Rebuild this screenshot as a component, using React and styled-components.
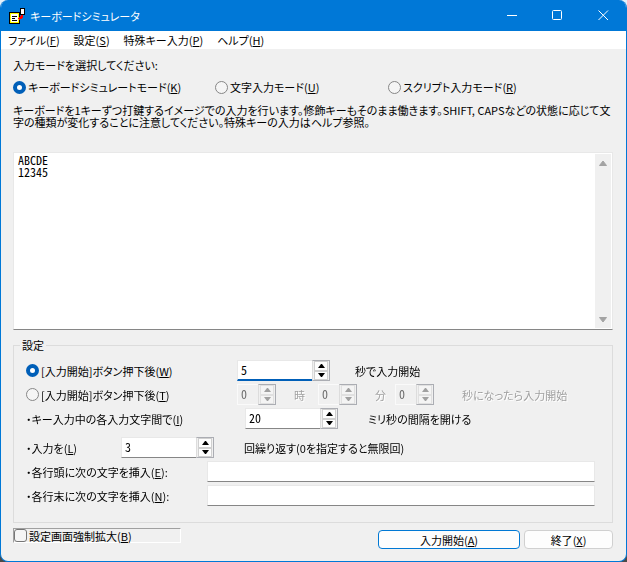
import { useState } from "react"
import styled, { createGlobalStyle } from "styled-components"

const GlobalStyle = createGlobalStyle`
  * {
    box-sizing: border-box;
  }

  body {
    margin: 0;
    background: linear-gradient(#e4f1fb 50%, #4a4a48 50%);
  }

  body, button, input, textarea {
    font-family: "Noto Sans CJK JP", sans-serif;
    font-size: 11px;
    font-feature-settings: "palt";
    color: #000;
  }
`

const Window = styled.div`
  display: flex;
  flex-direction: column;
  min-height: 100vh;
  border: 1px solid #0078d7;
  border-top: 0;
  border-radius: 8px;
  background-color: #f0f0f0;
  overflow: hidden;
`

const TitleBar = styled.header`
  display: flex;
  align-items: center;
  height: 31px;
  padding-left: 8px;
  background-color: #0078d7;
  color: #fff;
`

const Title = styled.h1`
  flex: 1;
  margin: 0 0 0 4px;
  font-size: 11px;
  font-weight: 400;
`

const CaptionButton = styled.button`
  display: flex;
  align-items: center;
  justify-content: center;
  width: 46px;
  height: 31px;
  padding: 0;
  border: 0;
  background: none;

  &:hover {
    background-color: rgba(255, 255, 255, 0.15);
  }
`

const MenuBar = styled.nav`
  display: flex;
  gap: 14px;
  height: 18px;
  padding: 0 7px;
  background-color: #fff;
`

const MenuItem = styled.button`
  padding: 0;
  border: 0;
  background: none;
  line-height: 18px;
`

const Body = styled.main`
  display: flex;
  flex: 1;
  flex-direction: column;
  padding: 8px 13px 12px 12px;
`

const Prompt = styled.p`
  margin: 0;
  line-height: 16px;
`

const Modes = styled.div`
  display: grid;
  grid-template-columns: 202px 173px 1fr;
  margin-top: 6px;
`

const Choice = styled.label`
  display: flex;
  align-items: center;
  gap: 2px;
  line-height: 16px;
  white-space: nowrap;
`

const Radio = styled.input.attrs({ type: "radio" })`
  appearance: none;
  width: 13px;
  height: 13px;
  margin: 0;
  border: 1px solid #868686;
  border-radius: 50%;
  background-color: #f5f5f5;

  &:checked {
    border: 4px solid #005fb8;
    background-color: #fff;
  }
`

const Check = styled.input.attrs({ type: "checkbox" })`
  appearance: none;
  width: 13px;
  height: 13px;
  margin: 0;
  border: 1px solid #767676;
  border-radius: 3px;
  background-color: #f5f5f5;

  &:checked {
    background-color: #005fb8;
  }
`

const Description = styled.p`
  margin: 9px 0 0;
  line-height: 12px;
  white-space: nowrap;
`

const Editor = styled.div`
  display: flex;
  flex: 1;
  min-height: 177px;
  margin-top: 24px;
  padding: 1px 1px 1px 0;
  border: 1px solid #e8e8e8;
  border-bottom-color: #868686;
  background-color: #fff;
`

const EditorText = styled.textarea`
  flex: 1;
  min-width: 0;
  padding: 0 4px;
  border: 0;
  outline: 0;
  background: none;
  font-size: 12px;
  line-height: 12px;
  font-feature-settings: "hwid";
  resize: none;
`

const ScrollBar = styled.div`
  display: flex;
  flex-direction: column;
  justify-content: space-between;
  width: 16px;
  background-color: #f0f0f0;
`

const ScrollButton = styled.button`
  width: 16px;
  height: 17px;
  padding: 0;
  border: 0;
  background: none;
  line-height: 0;
`

const Settings = styled.fieldset`
  min-width: 0;
  margin: 7px 0 0;
  padding: 7px 17px 16px 12px;
  border: 1px solid #dcdcdc;
`

const Legend = styled.legend`
  margin-left: -6px;
  padding: 0 2px;
  line-height: 16px;
`

const Rows = styled.div`
  display: flex;
  flex-direction: column;
  gap: 3px;

  & + & {
    margin-top: 8px;
  }
`

const Row = styled.div`
  display: flex;
  align-items: center;
  height: 21px;
  white-space: nowrap;
`

const Lead = styled.div`
  flex: none;
  width: ${props => props.width}px;
`

const Unit = styled.span`
  margin: 0 ${props => props.after || 0}px 0 ${props => props.before}px;
  line-height: 16px;

  ${props => props.disabled && `
    color: #a0a0a0;
    text-shadow: 1px 1px #fff;
  `}
`

const Spin = styled.div`
  display: flex;
  flex: none;
  width: ${props => props.width}px;
  height: 21px;
`

const SpinInput = styled.input`
  flex: 1;
  min-width: 0;
  padding: 0 3px 3px;
  border: 1px solid #e8e8e8;
  border-right: 0;
  border-bottom-color: #868686;
  border-radius: 0;
  outline: 0;
  background-color: #fff;
  font-size: 12px;
  font-feature-settings: "hwid";

  &:focus {
    border-bottom: 2px solid #005fb8;
    padding-bottom: 2px;
  }

  &:disabled {
    border-color: #fafafa;
    background-color: #f0f0f0;
    color: #6d6d6d;
  }
`

const SpinButtons = styled.div`
  display: flex;
  flex-direction: column;
  width: 18px;
  border: 1px solid #abadb3;
  border-left-color: #dcdcdc;
  background-color: #f0f0f0;
`

const SpinButton = styled.button`
  display: flex;
  flex: 1;
  align-items: center;
  justify-content: center;
  margin: 0 1px;
  padding: 0;
  border: 1px solid #d0d0d0;
  background-color: #fdfdfd;
  color: #000;

  &:disabled {
    border-color: #e0e0e0;
    background-color: #f4f4f4;
    color: #a0a0a0;
  }
`

const TextField = styled.input`
  flex: 1;
  min-width: 0;
  height: 21px;
  padding: 0 4px;
  border: 1px solid #e8e8e8;
  border-bottom-color: #868686;
  border-radius: 0;
  outline: 0;
  background-color: #fff;
`

const Footer = styled.footer`
  display: flex;
  align-items: flex-start;
  gap: 4px;
  margin-top: 5px;
`

const Enlarge = styled(Choice)`
  width: 168px;
  height: 15px;
  margin-right: auto;
  border: 1px solid #fff;
  border-top-color: #a0a0a0;
  border-left-color: #a0a0a0;
`

const Button = styled.button`
  width: ${props => props.primary ? 142 : 89}px;
  height: 19px;
  margin-top: 2px;
  padding: 0;
  border: 1px solid ${props => props.primary ? "#0078d4" : "#d0d0d0"};
  border-radius: 4px;
  background-color: #fdfdfd;
  line-height: 16px;
`

const AppIcon = () => (
  <svg width="17" height="16" viewBox="0 0 17 16" shapeRendering="crispEdges" aria-hidden="true">
    <rect x="0" y="4" width="11" height="12" fill="#000" />
    <rect x="1" y="5" width="9" height="10" fill="#ff0" />
    <rect x="2" y="6" width="7" height="8" fill="#fff" />
    <path d="M3 8h5v1H3zM3 10h3v1H3zM3 12h5v1H3z" fill="#000" />
    <rect x="11" y="0" width="5" height="7" fill="#000" />
    <rect x="12" y="1" width="3" height="5" fill="#fff" />
    <path d="M12 7h2v3h-1v1h-2v1h-1v-1H9v-1h1V9h1V8h1z" fill="#f00" />
  </svg>
)

const Triangle = ({ down }) => (
  <svg width="7" height="4" viewBox="0 0 7 4" aria-hidden="true">
    <path d={down ? "M0 0h7L4 4H3z" : "M0 4h7L4 0H3z"} fill="currentColor" />
  </svg>
)

const ScrollArrow = ({ down }) => (
  <svg width="10" height="8" viewBox="0 0 10 8" aria-hidden="true">
    <path
      d={down ? "M1.5 1.5h7L5 6z" : "M1.5 6.5h7L5 2z"}
      fill="#a3a3a3"
      stroke="#a3a3a3"
      strokeLinejoin="round"
    />
  </svg>
)

const Key = ({ children }) => <>(<u>{children}</u>)</>

const Spinner = ({ id, label, start, width = 93, disabled, autoFocus }) => {
  const [value, setValue] = useState(start)

  return (
    <Spin width={width}>
      <SpinInput
        id={id}
        aria-label={label}
        value={value}
        disabled={disabled}
        autoFocus={autoFocus}
        onChange={e => setValue(e.target.value)}
      />
      <SpinButtons>
        <SpinButton aria-label="+" disabled={disabled} onClick={() => setValue(Number(value) + 1)}>
          <Triangle />
        </SpinButton>
        <SpinButton aria-label="-" disabled={disabled} onClick={() => setValue(Math.max(0, value - 1))}>
          <Triangle down />
        </SpinButton>
      </SpinButtons>
    </Spin>
  )
}

function App() {
  return (
    <Window>
      <GlobalStyle />
      <TitleBar>
        <AppIcon />
        <Title>キーボードシミュレータ</Title>
        <CaptionButton aria-label="最小化">
          <svg width="11" height="11" stroke="#fff"><path d="M1 5.5h10" /></svg>
        </CaptionButton>
        <CaptionButton aria-label="最大化">
          <svg width="11" height="11" stroke="#fff" fill="none"><rect x="0.5" y="0.5" width="9" height="9" rx="1" /></svg>
        </CaptionButton>
        <CaptionButton aria-label="閉じる">
          <svg width="11" height="11" stroke="#fff"><path d="M0.5 0.5l9.5 9.5M10 0.5L0.5 10" /></svg>
        </CaptionButton>
      </TitleBar>

      <MenuBar>
        <MenuItem>ファイル<Key>F</Key></MenuItem>
        <MenuItem>設定<Key>S</Key></MenuItem>
        <MenuItem>特殊キー入力<Key>P</Key></MenuItem>
        <MenuItem>ヘルプ<Key>H</Key></MenuItem>
      </MenuBar>

      <Body>
        <Prompt>入力モードを選択してください:</Prompt>
        <Modes>
          <Choice>
            <Radio name="mode" defaultChecked />
            <span>キーボードシミュレートモード<Key>K</Key></span>
          </Choice>
          <Choice>
            <Radio name="mode" />
            <span>文字入力モード<Key>U</Key></span>
          </Choice>
          <Choice>
            <Radio name="mode" />
            <span>スクリプト入力モード<Key>R</Key></span>
          </Choice>
        </Modes>
        <Description>
          キーボードを1キーずつ打鍵するイメージでの入力を行います。修飾キーもそのまま働きます。SHIFT, CAPSなどの状態に応じて文
          <br />
          字の種類が変化することに注意してください。特殊キーの入力はヘルプ参照。
        </Description>

        <Editor>
          <EditorText aria-label="入力" defaultValue={"ABCDE\n12345"} />
          <ScrollBar>
            <ScrollButton aria-label="上へ"><ScrollArrow /></ScrollButton>
            <ScrollButton aria-label="下へ"><ScrollArrow down /></ScrollButton>
          </ScrollBar>
        </Editor>

        <Settings>
          <Legend>設定</Legend>
          <Rows>
            <Row>
              <Lead width={211}>
                <Choice>
                  <Radio name="start" defaultChecked />
                  <span>[入力開始]ボタン押下後<Key>W</Key></span>
                </Choice>
              </Lead>
              <Spinner label="秒" start={5} autoFocus />
              <Unit before={25}>秒で入力開始</Unit>
            </Row>
            <Row>
              <Lead width={211}>
                <Choice>
                  <Radio name="start" />
                  <span>[入力開始]ボタン押下後<Key>T</Key></span>
                </Choice>
              </Lead>
              <Spinner label="時" start={0} width={39} disabled />
              <Unit before={18} after={13} disabled>時</Unit>
              <Spinner label="分" start={0} width={39} disabled />
              <Unit before={18} after={9} disabled>分</Unit>
              <Spinner label="秒" start={0} width={39} disabled />
              <Unit before={28} disabled>秒になったら入力開始</Unit>
            </Row>
            <Row>
              <Lead width={219}><label htmlFor="interval">・キー入力中の各入力文字間で<Key>I</Key></label></Lead>
              <Spinner id="interval" start={20} />
              <Unit before={30}>ミリ秒の間隔を開ける</Unit>
            </Row>
          </Rows>
          <Rows>
            <Row>
              <Lead width={95}><label htmlFor="repeat">・入力を<Key>L</Key></label></Lead>
              <Spinner id="repeat" start={3} />
              <Unit before={30}>回繰り返す(0を指定すると無限回)</Unit>
            </Row>
            <Row>
              <Lead width={181}><label htmlFor="head">・各行頭に次の文字を挿入<Key>E</Key>:</label></Lead>
              <TextField id="head" />
            </Row>
            <Row>
              <Lead width={181}><label htmlFor="tail">・各行末に次の文字を挿入<Key>N</Key>:</label></Lead>
              <TextField id="tail" />
            </Row>
          </Rows>
        </Settings>

        <Footer>
          <Enlarge>
            <Check />
            <span>設定画面強制拡大<Key>B</Key></span>
          </Enlarge>
          <Button primary>入力開始<Key>A</Key></Button>
          <Button>終了<Key>X</Key></Button>
        </Footer>
      </Body>
    </Window>
  )
}

export default App
